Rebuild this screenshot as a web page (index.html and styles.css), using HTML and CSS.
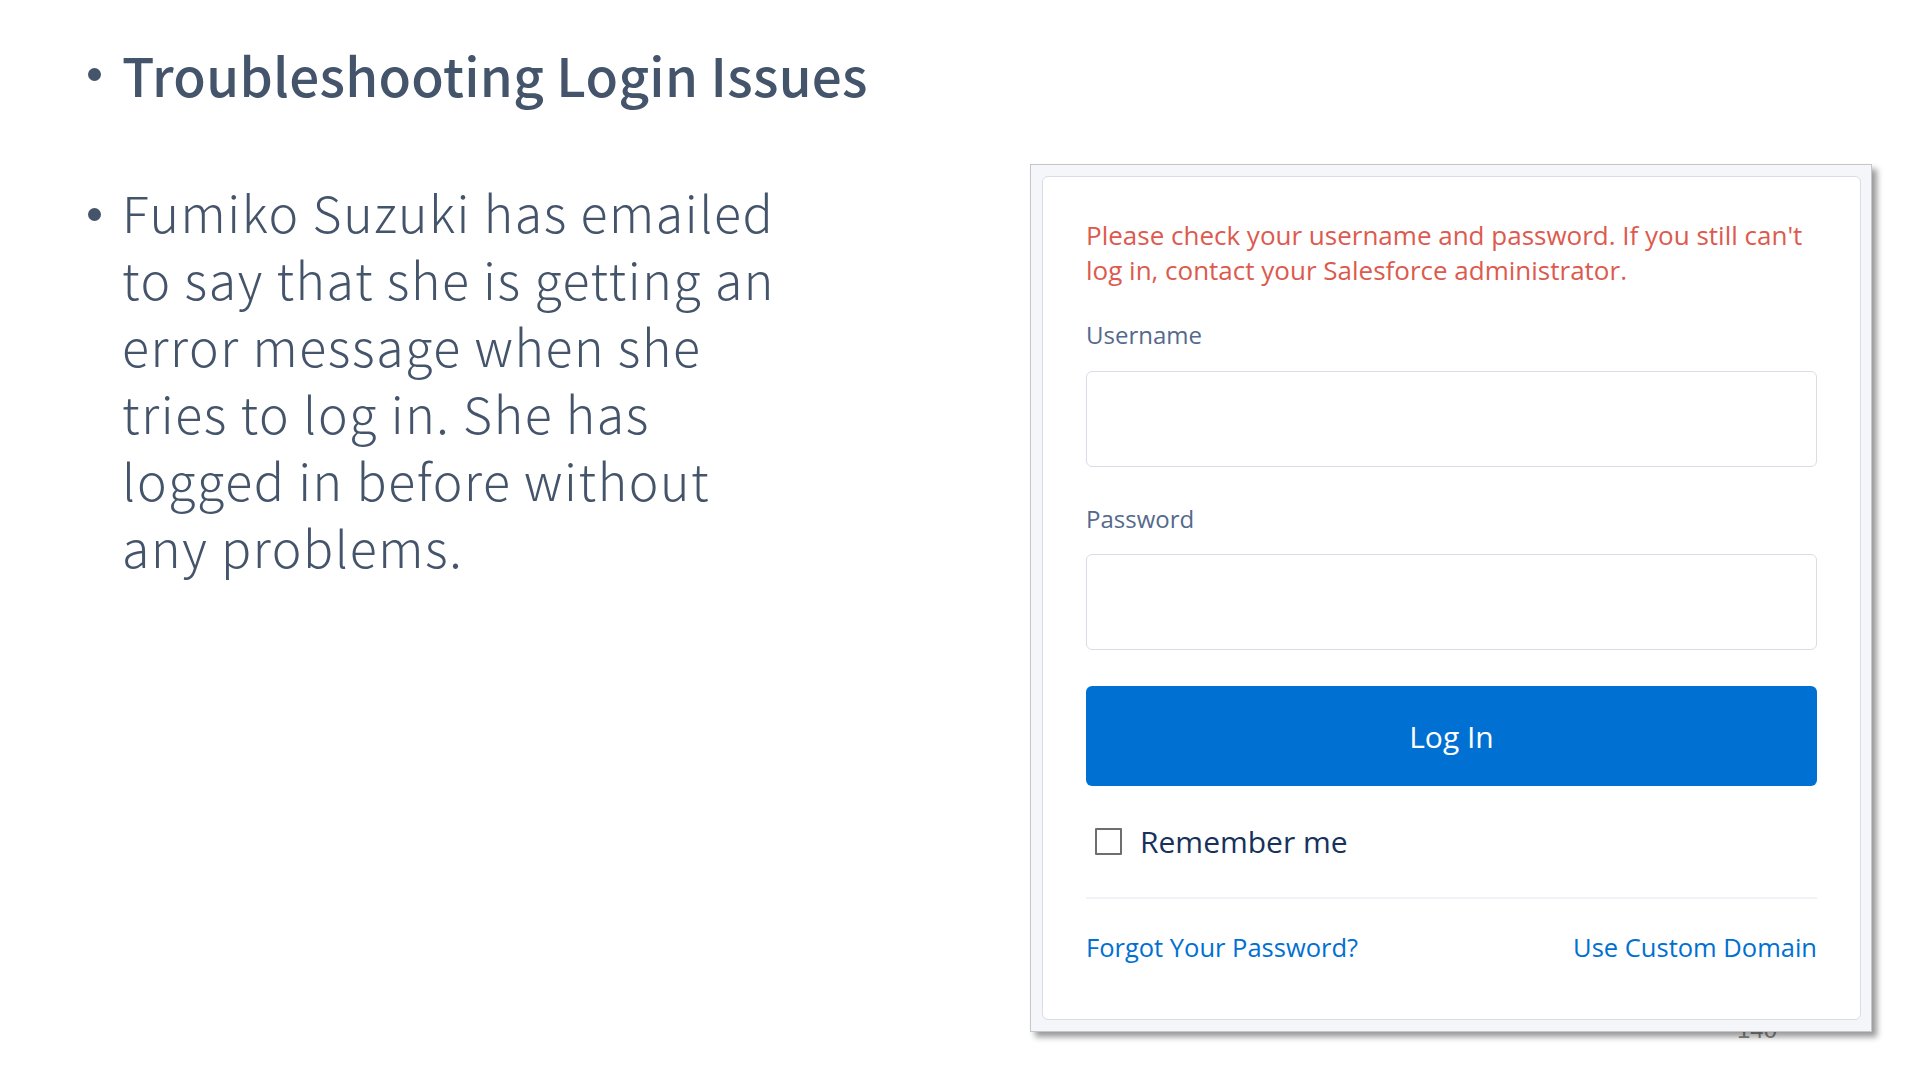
FILE: index.html
```html
<!DOCTYPE html>
<html lang="en">
<head>
<meta charset="utf-8">
<title>Troubleshooting Login Issues</title>
<link rel="stylesheet" href="styles.css">
</head>
<body>
<div class="slide">
  <div class="left">
    <div class="bullet-row title-row">
      <span class="dot"></span>
      <h1 class="title">Troubleshooting Login Issues</h1>
    </div>
    <div class="bullet-row body-row">
      <span class="dot"></span>
      <p class="body-text">Fumiko Suzuki has emailed<br>to say that she is getting an<br>error message when she<br>tries to log in. She has<br>logged in before without<br>any problems.</p>
    </div>
  </div>
  <div class="right">
    <div class="shot">
      <div class="card">
        <p class="error">Please check your username and password. If you still can't log in, contact your Salesforce administrator.</p>
        <label class="label">Username</label>
        <div class="input"></div>
        <label class="label label-pw">Password</label>
        <div class="input"></div>
        <div class="btn">Log In</div>
        <div class="remember">
          <span class="checkbox"></span>
          <span class="remember-text">Remember me</span>
        </div>
        <div class="divider"></div>
        <div class="links">
          <span class="link">Forgot Your Password?</span>
          <span class="link">Use Custom Domain</span>
        </div>
      </div>
    </div>
  </div>
  <div class="page-num">140</div>
</div>
</body>
</html>
```

FILE: styles.css
```css
html, body {
  margin: 0;
  padding: 0;
  background: #ffffff;
}
.slide {
  position: relative;
  width: 1920px;
  height: 1080px;
  display: flex;
  overflow: hidden;
  font-family: "Noto Sans CJK SC", "Open Sans", sans-serif;
  color: #44546a;
}
.left {
  padding-left: 88px;
  padding-top: 38px;
  width: 860px;
}
.bullet-row {
  display: flex;
  align-items: flex-start;
}
.dot {
  flex: none;
  width: 13px;
  height: 13px;
  border-radius: 50%;
  background: #44546a;
  margin-right: 21px;
}
.title-row .dot {
  margin-top: 30px;
}
.title {
  margin: 0;
  font-size: 53px;
  line-height: 72px;
  font-weight: 500;
  letter-spacing: 0.3px;
  color: #44546a;
}
.body-row {
  margin-top: 68px;
}
.body-row .dot {
  margin-top: 30px;
}
.body-text {
  margin: 0;
  font-size: 50px;
  line-height: 67px;
  font-weight: 300;
  letter-spacing: 1.6px;
}
.right {
  margin-left: auto;
  margin-right: 48px;
  padding-top: 164px;
  position: relative;
  z-index: 2;
}
.shot {
  width: 842px;
  height: 868px;
  border: 1px solid #c4c6c9;
  background: #f4f6f9;
  box-shadow: 5px 5px 6px rgba(0, 0, 0, 0.4);
  padding: 11px 10px 11px 11px;
  box-sizing: border-box;
  display: flex;
}
.card {
  flex: 1;
  background: #ffffff;
  border: 1px solid #d8dde6;
  border-radius: 6px;
  padding: 41px 43px 0 43px;
  font-family: "Open Sans", "Lato", sans-serif;
  display: flex;
  flex-direction: column;
}
.error {
  margin: 0;
  font-size: 26px;
  line-height: 35px;
  color: #dc5a4e;
}
.label {
  display: block;
  margin-top: 32px;
  margin-bottom: 21px;
  font-size: 24px;
  line-height: 30px;
  color: #54698d;
}
.label-pw {
  margin-top: 37px;
  margin-bottom: 20px;
}
.input {
  height: 94px;
  border: 1px solid #d8dde6;
  border-radius: 6px;
  background: #ffffff;
}
.btn {
  margin-top: 36px;
  height: 100px;
  border-radius: 6px;
  background: #0070d2;
  color: #ffffff;
  font-size: 30px;
  display: flex;
  align-items: center;
  justify-content: center;
}
.remember {
  margin-top: 35px;
  height: 40px;
  display: flex;
  align-items: center;
  padding-left: 9px;
}
.checkbox {
  width: 23px;
  height: 23px;
  border: 2px solid #6e6e6e;
  border-radius: 1px;
  margin-right: 18px;
}
.remember-text {
  font-size: 30px;
  color: #16325c;
}
.divider {
  margin-top: 36px;
  height: 2px;
  background: #f0f2f5;
}
.links {
  margin-top: 33px;
  display: flex;
  justify-content: space-between;
  font-size: 25.5px;
  line-height: 30px;
}
.link {
  color: #0070d2;
}
.page-num {
  position: absolute;
  left: 1737px;
  top: 1016px;
  font-family: "Liberation Sans", sans-serif;
  font-size: 24px;
  color: #8a8a8a;
  z-index: 1;
}
```
